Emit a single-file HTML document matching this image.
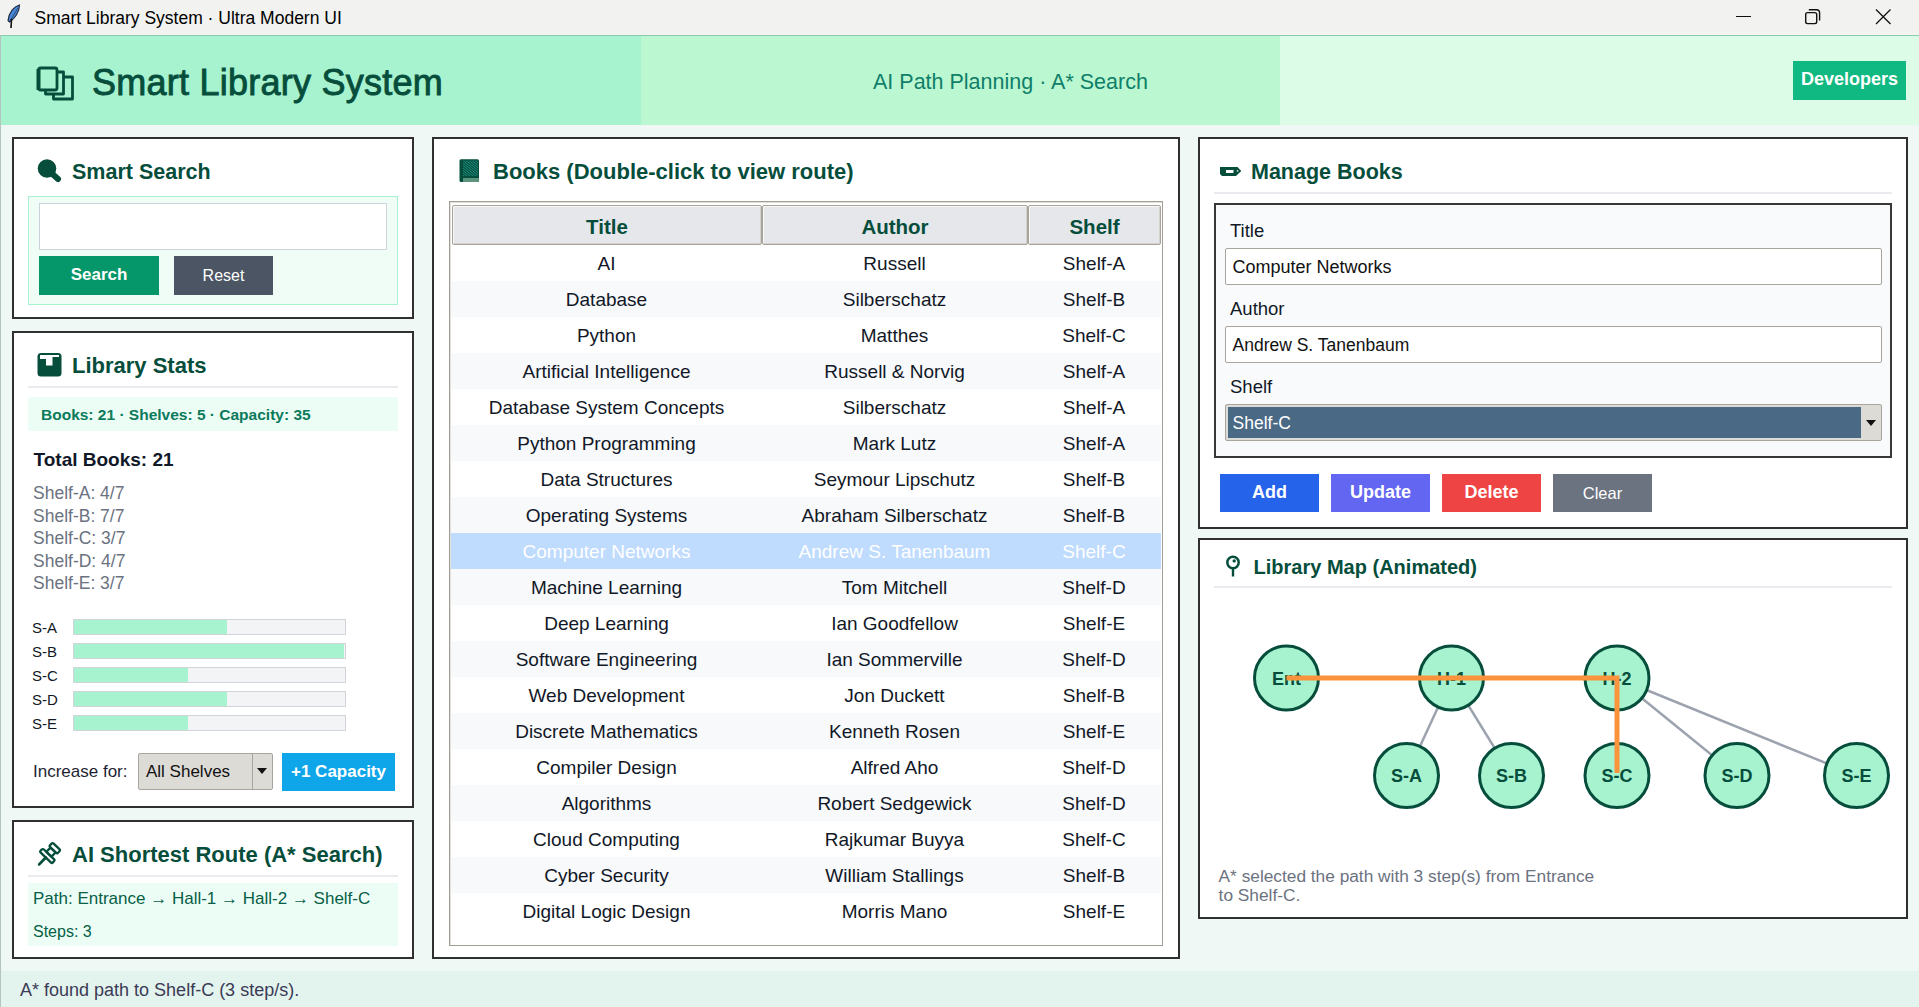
<!DOCTYPE html>
<html><head><meta charset="utf-8"><title>Smart Library System</title>
<style>
html,body{margin:0;padding:0;width:1919px;height:1007px;overflow:hidden;background:#eef8f4}
body{position:relative;font-family:"Liberation Sans",sans-serif}
body>div{position:absolute}
.t{white-space:nowrap}
svg{overflow:visible}
</style></head><body>
<div style="left:0px;top:0px;width:1919px;height:35px;background:#f2f2f0"></div>
<div style="left:0px;top:34px;width:1919px;height:1px;background:#f7f4f2"></div>
<svg style="position:absolute;left:0;top:0" width="30" height="34" viewBox="0 0 30 34"><path d="M19.5 5 C14 6.5 9 12 8 20.5 L9.5 22 C15 18.5 19.5 12 19.5 5 Z" fill="#4a86d8" stroke="#1c2a3a" stroke-width="1.1"/><path d="M18 8 L10.5 20" stroke="#2a4a7a" stroke-width="1"/><path d="M11.5 19 L11 28" stroke="#111" stroke-width="1.6"/></svg>
<div class="t" style="left:34.5px;top:7.44px;font-size:17.5px;line-height:23px;font-weight:normal;color:#000;">Smart Library System · Ultra Modern UI</div>
<div style="left:1736px;top:16px;width:15px;height:1px;background:#111"></div>
<svg style="position:absolute;left:1800px;top:4px" width="26" height="26" viewBox="0 0 26 26"><rect x="5.7" y="8.6" width="11" height="11" rx="1.8" fill="none" stroke="#111" stroke-width="1.4"/><path d="M8.8 5.7 H16.5 Q19.6 5.7 19.6 8.8 V16.5" fill="none" stroke="#111" stroke-width="1.4"/></svg>
<svg style="position:absolute;left:1869px;top:3px" width="28" height="28" viewBox="0 0 28 28"><path d="M7 6.5 L21.5 21 M21.5 6.5 L7 21" stroke="#111" stroke-width="1.3"/></svg>
<div style="left:0px;top:35px;width:1919px;height:1px;background:#86cbae"></div>
<div style="left:0px;top:36px;width:641px;height:89px;background:#a7f3d0"></div>
<div style="left:641px;top:36px;width:639px;height:89px;background:#bbf7d0"></div>
<div style="left:1280px;top:36px;width:639px;height:89px;background:#dcfce7"></div>
<svg style="position:absolute;left:36px;top:65px" width="40" height="37" viewBox="0 0 40 37"><g fill="none" stroke="#064e3b" stroke-width="2.8" stroke-linejoin="round"><rect x="2.5" y="3" width="18.5" height="22" rx="2"/><path d="M21 7 H27.5 V29 H9.5 V25"/><path d="M27.5 12 H36.5 V34 H17.5 V29"/></g><path d="M2.5 4 V25" stroke="#064e3b" stroke-width="4"/></svg>
<div class="t" style="left:92px;top:59.03px;font-size:36px;line-height:47px;font-weight:normal;color:#064e3b;letter-spacing:0.25px;-webkit-text-stroke:0.9px #064e3b">Smart Library System</div>
<div class="t" style="left:873px;top:67.55px;font-size:21.5px;line-height:28px;font-weight:normal;color:#0f7f6a;">AI Path Planning · A* Search</div>
<div style="left:1793px;top:61px;width:113px;height:39px;background:#10b981"></div>
<div class="t" style="left:1549.5px;width:600px;text-align:center;top:68.26px;font-size:18px;line-height:23px;font-weight:bold;color:#fff;">Developers</div>
<div style="left:0px;top:125px;width:1919px;height:846px;background:#f0f8f5"></div>
<div style="left:0px;top:971px;width:1919px;height:36px;background:#e3f3ee"></div>
<div class="t" style="left:20px;top:978.66px;font-size:18px;line-height:23px;font-weight:normal;color:#3b3b55;">A* found path to Shelf-C (3 step/s).</div>
<div style="left:12px;top:137px;width:402px;height:182px;background:#fff;border:2px solid #303030;box-sizing:border-box"></div>
<svg style="position:absolute;left:36px;top:158px" width="28" height="26" viewBox="0 0 28 26"><circle cx="11" cy="10.5" r="9.3" fill="#064e3b"/><path d="M17 16.5 L22 21" stroke="#064e3b" stroke-width="6" stroke-linecap="round"/></svg>
<div class="t" style="left:72px;top:157.95px;font-size:21.5px;line-height:28px;font-weight:bold;color:#064e3b;">Smart Search</div>
<div style="left:28px;top:196px;width:370px;height:109px;background:#f0fdf7;border:1px solid #a7f3d0;box-sizing:border-box"></div>
<div style="left:39px;top:203px;width:348px;height:47px;background:#fff;border:1px solid #cfd2dc;box-sizing:border-box"></div>
<div style="left:39px;top:256px;width:120px;height:38.5px;background:#059669"></div>
<div class="t" style="left:-201px;width:600px;text-align:center;top:264.11px;font-size:17px;line-height:22px;font-weight:bold;color:#fff;">Search</div>
<div style="left:174px;top:256px;width:99px;height:38.5px;background:#4b5563"></div>
<div class="t" style="left:-76.5px;width:600px;text-align:center;top:264.96px;font-size:16px;line-height:21px;font-weight:normal;color:#fff;">Reset</div>
<div style="left:12px;top:331px;width:402px;height:477px;background:#fff;border:2px solid #303030;box-sizing:border-box"></div>
<svg style="position:absolute;left:35px;top:352px" width="28" height="26" viewBox="0 0 28 26"><rect x="2.5" y="1" width="24" height="23.5" rx="3.5" fill="#064e3b"/><path d="M5 3 H24 V5 H17.5 V13.5 H11 V7 H5 Z" fill="#fff"/></svg>
<div class="t" style="left:72px;top:351.18px;font-size:22px;line-height:29px;font-weight:bold;color:#064e3b;">Library Stats</div>
<div style="left:28px;top:386px;width:370px;height:2px;background:#eaebee"></div>
<div style="left:28px;top:397px;width:370px;height:34px;background:#ecfdf5"></div>
<div class="t" style="left:41px;top:405.03px;font-size:15.5px;line-height:20px;font-weight:bold;color:#0b7a5c;">Books: 21 · Shelves: 5 · Capacity: 35</div>
<div class="t" style="left:33.5px;top:446.72px;font-size:19px;line-height:25px;font-weight:bold;color:#111827;">Total Books: 21</div>
<div class="t" style="left:33px;top:482.44px;font-size:17.5px;line-height:23px;font-weight:normal;color:#6b7280;">Shelf-A: 4/7</div>
<div class="t" style="left:33px;top:505.44px;font-size:17.5px;line-height:23px;font-weight:normal;color:#6b7280;">Shelf-B: 7/7</div>
<div class="t" style="left:33px;top:527.44px;font-size:17.5px;line-height:23px;font-weight:normal;color:#6b7280;">Shelf-C: 3/7</div>
<div class="t" style="left:33px;top:550.44px;font-size:17.5px;line-height:23px;font-weight:normal;color:#6b7280;">Shelf-D: 4/7</div>
<div class="t" style="left:33px;top:572.44px;font-size:17.5px;line-height:23px;font-weight:normal;color:#6b7280;">Shelf-E: 3/7</div>
<div class="t" style="left:32px;top:618.40px;font-size:15px;line-height:20px;font-weight:normal;color:#111827;">S-A</div>
<div style="left:73px;top:619px;width:273px;height:16px;background:#f3f4f6;border:1px solid #d1d5db;box-sizing:border-box"></div>
<div style="left:74px;top:620px;width:153px;height:14px;background:#a7f3d0"></div>
<div class="t" style="left:32px;top:642.40px;font-size:15px;line-height:20px;font-weight:normal;color:#111827;">S-B</div>
<div style="left:73px;top:643px;width:273px;height:16px;background:#f3f4f6;border:1px solid #d1d5db;box-sizing:border-box"></div>
<div style="left:74px;top:644px;width:270px;height:14px;background:#a7f3d0"></div>
<div class="t" style="left:32px;top:666.40px;font-size:15px;line-height:20px;font-weight:normal;color:#111827;">S-C</div>
<div style="left:73px;top:667px;width:273px;height:16px;background:#f3f4f6;border:1px solid #d1d5db;box-sizing:border-box"></div>
<div style="left:74px;top:668px;width:114px;height:14px;background:#a7f3d0"></div>
<div class="t" style="left:32px;top:690.40px;font-size:15px;line-height:20px;font-weight:normal;color:#111827;">S-D</div>
<div style="left:73px;top:691px;width:273px;height:16px;background:#f3f4f6;border:1px solid #d1d5db;box-sizing:border-box"></div>
<div style="left:74px;top:692px;width:153px;height:14px;background:#a7f3d0"></div>
<div class="t" style="left:32px;top:714.40px;font-size:15px;line-height:20px;font-weight:normal;color:#111827;">S-E</div>
<div style="left:73px;top:715px;width:273px;height:16px;background:#f3f4f6;border:1px solid #d1d5db;box-sizing:border-box"></div>
<div style="left:74px;top:716px;width:114px;height:14px;background:#a7f3d0"></div>
<div class="t" style="left:33px;top:761.11px;font-size:17px;line-height:22px;font-weight:normal;color:#1f1f33;">Increase for:</div>
<div style="left:138px;top:753px;width:135px;height:37px;background:#dddbd6;border:1px solid #a9a59e;border-radius:2px;box-sizing:border-box"></div>
<div style="left:252px;top:754px;width:1px;height:35px;background:#a9a59e"></div>
<svg style="position:absolute;left:255px;top:766px" width="14" height="10" viewBox="0 0 14 10"><path d="M2 2 H12 L7 8 Z" fill="#111"/></svg>
<div class="t" style="left:146px;top:761.11px;font-size:17px;line-height:22px;font-weight:normal;color:#111;">All Shelves</div>
<div style="left:282px;top:753px;width:113px;height:38px;background:#0ea5e9"></div>
<div class="t" style="left:38.5px;width:600px;text-align:center;top:761.11px;font-size:17px;line-height:22px;font-weight:bold;color:#fff;">+1 Capacity</div>
<div style="left:12px;top:820px;width:402px;height:139px;background:#fff;border:2px solid #303030;box-sizing:border-box"></div>
<svg style="position:absolute;left:30px;top:835px" width="40" height="40" viewBox="0 0 40 40"><g transform="translate(19.6,18.6) rotate(44)" fill="none" stroke="#064e3b" stroke-width="2.3" stroke-linejoin="round"><rect x="-5.5" y="-10" width="11" height="5" rx="1.5"/><rect x="-3.5" y="-5" width="7" height="6"/><rect x="-8.5" y="1" width="17" height="4.5" rx="1.5"/><path d="M0 5.5 V15" stroke-width="2.8" stroke-linecap="round"/></g></svg>
<div class="t" style="left:72px;top:839.88px;font-size:22px;line-height:29px;font-weight:bold;color:#064e3b;">AI Shortest Route (A* Search)</div>
<div style="left:28px;top:875px;width:370px;height:2px;background:#eaebee"></div>
<div style="left:28px;top:883px;width:370px;height:63px;background:#ecfdf5"></div>
<div class="t" style="left:33px;top:888.31px;font-size:17px;line-height:22px;font-weight:normal;color:#065f46;">Path: Entrance → Hall-1 → Hall-2 → Shelf-C</div>
<div class="t" style="left:33px;top:920.56px;font-size:16px;line-height:21px;font-weight:normal;color:#065f46;">Steps: 3</div>
<div style="left:432px;top:137px;width:748px;height:822px;background:#fff;border:2px solid #303030;box-sizing:border-box"></div>
<svg style="position:absolute;left:458px;top:158px" width="24" height="26" viewBox="0 0 24 26"><defs><clipPath id="bk"><rect x="5" y="2.5" width="15" height="17"/></clipPath></defs><rect x="1.5" y="1.3" width="19.5" height="22.7" rx="1.5" fill="#064e3b"/><g clip-path="url(#bk)"><path d="M-22 0 L0 18" stroke="#1f8f86" stroke-width="1"/><path d="M-19 0 L3 18" stroke="#1f8f86" stroke-width="1"/><path d="M-16 0 L6 18" stroke="#1f8f86" stroke-width="1"/><path d="M-13 0 L9 18" stroke="#1f8f86" stroke-width="1"/><path d="M-10 0 L12 18" stroke="#1f8f86" stroke-width="1"/><path d="M-7 0 L15 18" stroke="#1f8f86" stroke-width="1"/><path d="M-4 0 L18 18" stroke="#1f8f86" stroke-width="1"/><path d="M-1 0 L21 18" stroke="#1f8f86" stroke-width="1"/><path d="M2 0 L24 18" stroke="#1f8f86" stroke-width="1"/><path d="M5 0 L27 18" stroke="#1f8f86" stroke-width="1"/><path d="M8 0 L30 18" stroke="#1f8f86" stroke-width="1"/><path d="M11 0 L33 18" stroke="#1f8f86" stroke-width="1"/><path d="M14 0 L36 18" stroke="#1f8f86" stroke-width="1"/><path d="M17 0 L39 18" stroke="#1f8f86" stroke-width="1"/></g><rect x="5" y="20" width="16" height="4" fill="#5d9480"/></svg>
<div class="t" style="left:493px;top:156.88px;font-size:22px;line-height:29px;font-weight:bold;color:#064e3b;">Books (Double-click to view route)</div>
<div style="left:449px;top:201px;width:714px;height:745px;background:#fff;border:1px solid #a29e96;box-shadow:inset 1px 1px 0 #e2e0db;box-sizing:border-box"></div>
<div style="left:452px;top:205px;width:310px;height:40px;background:#e5e7eb;border:1px solid #a8a49c;border-radius:2px;box-shadow:inset 1px 1px 0 #f8f8f6, inset -1px -1px 0 #d4d2cc;box-sizing:border-box"></div>
<div class="t" style="left:307.0px;width:600px;text-align:center;top:212.60px;font-size:20.5px;line-height:27px;font-weight:bold;color:#064e3b;">Title</div>
<div style="left:762px;top:205px;width:266px;height:40px;background:#e5e7eb;border:1px solid #a8a49c;border-radius:2px;box-shadow:inset 1px 1px 0 #f8f8f6, inset -1px -1px 0 #d4d2cc;box-sizing:border-box"></div>
<div class="t" style="left:595.0px;width:600px;text-align:center;top:212.60px;font-size:20.5px;line-height:27px;font-weight:bold;color:#064e3b;">Author</div>
<div style="left:1028px;top:205px;width:133px;height:40px;background:#e5e7eb;border:1px solid #a8a49c;border-radius:2px;box-shadow:inset 1px 1px 0 #f8f8f6, inset -1px -1px 0 #d4d2cc;box-sizing:border-box"></div>
<div class="t" style="left:794.5px;width:600px;text-align:center;top:212.60px;font-size:20.5px;line-height:27px;font-weight:bold;color:#064e3b;">Shelf</div>
<div class="t" style="left:306.5px;width:600px;text-align:center;top:251.12px;font-size:19px;line-height:25px;font-weight:normal;color:#111827;">AI</div>
<div class="t" style="left:594.5px;width:600px;text-align:center;top:251.12px;font-size:19px;line-height:25px;font-weight:normal;color:#111827;">Russell</div>
<div class="t" style="left:794px;width:600px;text-align:center;top:251.12px;font-size:19px;line-height:25px;font-weight:normal;color:#111827;">Shelf-A</div>
<div style="left:451px;top:281px;width:710px;height:36px;background:#f8f9fb"></div>
<div class="t" style="left:306.5px;width:600px;text-align:center;top:287.12px;font-size:19px;line-height:25px;font-weight:normal;color:#111827;">Database</div>
<div class="t" style="left:594.5px;width:600px;text-align:center;top:287.12px;font-size:19px;line-height:25px;font-weight:normal;color:#111827;">Silberschatz</div>
<div class="t" style="left:794px;width:600px;text-align:center;top:287.12px;font-size:19px;line-height:25px;font-weight:normal;color:#111827;">Shelf-B</div>
<div class="t" style="left:306.5px;width:600px;text-align:center;top:323.12px;font-size:19px;line-height:25px;font-weight:normal;color:#111827;">Python</div>
<div class="t" style="left:594.5px;width:600px;text-align:center;top:323.12px;font-size:19px;line-height:25px;font-weight:normal;color:#111827;">Matthes</div>
<div class="t" style="left:794px;width:600px;text-align:center;top:323.12px;font-size:19px;line-height:25px;font-weight:normal;color:#111827;">Shelf-C</div>
<div style="left:451px;top:353px;width:710px;height:36px;background:#f8f9fb"></div>
<div class="t" style="left:306.5px;width:600px;text-align:center;top:359.12px;font-size:19px;line-height:25px;font-weight:normal;color:#111827;">Artificial Intelligence</div>
<div class="t" style="left:594.5px;width:600px;text-align:center;top:359.12px;font-size:19px;line-height:25px;font-weight:normal;color:#111827;">Russell &amp; Norvig</div>
<div class="t" style="left:794px;width:600px;text-align:center;top:359.12px;font-size:19px;line-height:25px;font-weight:normal;color:#111827;">Shelf-A</div>
<div class="t" style="left:306.5px;width:600px;text-align:center;top:395.12px;font-size:19px;line-height:25px;font-weight:normal;color:#111827;">Database System Concepts</div>
<div class="t" style="left:594.5px;width:600px;text-align:center;top:395.12px;font-size:19px;line-height:25px;font-weight:normal;color:#111827;">Silberschatz</div>
<div class="t" style="left:794px;width:600px;text-align:center;top:395.12px;font-size:19px;line-height:25px;font-weight:normal;color:#111827;">Shelf-A</div>
<div style="left:451px;top:425px;width:710px;height:36px;background:#f8f9fb"></div>
<div class="t" style="left:306.5px;width:600px;text-align:center;top:431.12px;font-size:19px;line-height:25px;font-weight:normal;color:#111827;">Python Programming</div>
<div class="t" style="left:594.5px;width:600px;text-align:center;top:431.12px;font-size:19px;line-height:25px;font-weight:normal;color:#111827;">Mark Lutz</div>
<div class="t" style="left:794px;width:600px;text-align:center;top:431.12px;font-size:19px;line-height:25px;font-weight:normal;color:#111827;">Shelf-A</div>
<div class="t" style="left:306.5px;width:600px;text-align:center;top:467.12px;font-size:19px;line-height:25px;font-weight:normal;color:#111827;">Data Structures</div>
<div class="t" style="left:594.5px;width:600px;text-align:center;top:467.12px;font-size:19px;line-height:25px;font-weight:normal;color:#111827;">Seymour Lipschutz</div>
<div class="t" style="left:794px;width:600px;text-align:center;top:467.12px;font-size:19px;line-height:25px;font-weight:normal;color:#111827;">Shelf-B</div>
<div style="left:451px;top:497px;width:710px;height:36px;background:#f8f9fb"></div>
<div class="t" style="left:306.5px;width:600px;text-align:center;top:503.12px;font-size:19px;line-height:25px;font-weight:normal;color:#111827;">Operating Systems</div>
<div class="t" style="left:594.5px;width:600px;text-align:center;top:503.12px;font-size:19px;line-height:25px;font-weight:normal;color:#111827;">Abraham Silberschatz</div>
<div class="t" style="left:794px;width:600px;text-align:center;top:503.12px;font-size:19px;line-height:25px;font-weight:normal;color:#111827;">Shelf-B</div>
<div style="left:451px;top:533px;width:710px;height:36px;background:#bfdbfe"></div>
<div class="t" style="left:306.5px;width:600px;text-align:center;top:539.12px;font-size:19px;line-height:25px;font-weight:normal;color:#fff;">Computer Networks</div>
<div class="t" style="left:594.5px;width:600px;text-align:center;top:539.12px;font-size:19px;line-height:25px;font-weight:normal;color:#fff;">Andrew S. Tanenbaum</div>
<div class="t" style="left:794px;width:600px;text-align:center;top:539.12px;font-size:19px;line-height:25px;font-weight:normal;color:#fff;">Shelf-C</div>
<div style="left:451px;top:569px;width:710px;height:36px;background:#f8f9fb"></div>
<div class="t" style="left:306.5px;width:600px;text-align:center;top:575.12px;font-size:19px;line-height:25px;font-weight:normal;color:#111827;">Machine Learning</div>
<div class="t" style="left:594.5px;width:600px;text-align:center;top:575.12px;font-size:19px;line-height:25px;font-weight:normal;color:#111827;">Tom Mitchell</div>
<div class="t" style="left:794px;width:600px;text-align:center;top:575.12px;font-size:19px;line-height:25px;font-weight:normal;color:#111827;">Shelf-D</div>
<div class="t" style="left:306.5px;width:600px;text-align:center;top:611.12px;font-size:19px;line-height:25px;font-weight:normal;color:#111827;">Deep Learning</div>
<div class="t" style="left:594.5px;width:600px;text-align:center;top:611.12px;font-size:19px;line-height:25px;font-weight:normal;color:#111827;">Ian Goodfellow</div>
<div class="t" style="left:794px;width:600px;text-align:center;top:611.12px;font-size:19px;line-height:25px;font-weight:normal;color:#111827;">Shelf-E</div>
<div style="left:451px;top:641px;width:710px;height:36px;background:#f8f9fb"></div>
<div class="t" style="left:306.5px;width:600px;text-align:center;top:647.12px;font-size:19px;line-height:25px;font-weight:normal;color:#111827;">Software Engineering</div>
<div class="t" style="left:594.5px;width:600px;text-align:center;top:647.12px;font-size:19px;line-height:25px;font-weight:normal;color:#111827;">Ian Sommerville</div>
<div class="t" style="left:794px;width:600px;text-align:center;top:647.12px;font-size:19px;line-height:25px;font-weight:normal;color:#111827;">Shelf-D</div>
<div class="t" style="left:306.5px;width:600px;text-align:center;top:683.12px;font-size:19px;line-height:25px;font-weight:normal;color:#111827;">Web Development</div>
<div class="t" style="left:594.5px;width:600px;text-align:center;top:683.12px;font-size:19px;line-height:25px;font-weight:normal;color:#111827;">Jon Duckett</div>
<div class="t" style="left:794px;width:600px;text-align:center;top:683.12px;font-size:19px;line-height:25px;font-weight:normal;color:#111827;">Shelf-B</div>
<div style="left:451px;top:713px;width:710px;height:36px;background:#f8f9fb"></div>
<div class="t" style="left:306.5px;width:600px;text-align:center;top:719.12px;font-size:19px;line-height:25px;font-weight:normal;color:#111827;">Discrete Mathematics</div>
<div class="t" style="left:594.5px;width:600px;text-align:center;top:719.12px;font-size:19px;line-height:25px;font-weight:normal;color:#111827;">Kenneth Rosen</div>
<div class="t" style="left:794px;width:600px;text-align:center;top:719.12px;font-size:19px;line-height:25px;font-weight:normal;color:#111827;">Shelf-E</div>
<div class="t" style="left:306.5px;width:600px;text-align:center;top:755.12px;font-size:19px;line-height:25px;font-weight:normal;color:#111827;">Compiler Design</div>
<div class="t" style="left:594.5px;width:600px;text-align:center;top:755.12px;font-size:19px;line-height:25px;font-weight:normal;color:#111827;">Alfred Aho</div>
<div class="t" style="left:794px;width:600px;text-align:center;top:755.12px;font-size:19px;line-height:25px;font-weight:normal;color:#111827;">Shelf-D</div>
<div style="left:451px;top:785px;width:710px;height:36px;background:#f8f9fb"></div>
<div class="t" style="left:306.5px;width:600px;text-align:center;top:791.12px;font-size:19px;line-height:25px;font-weight:normal;color:#111827;">Algorithms</div>
<div class="t" style="left:594.5px;width:600px;text-align:center;top:791.12px;font-size:19px;line-height:25px;font-weight:normal;color:#111827;">Robert Sedgewick</div>
<div class="t" style="left:794px;width:600px;text-align:center;top:791.12px;font-size:19px;line-height:25px;font-weight:normal;color:#111827;">Shelf-D</div>
<div class="t" style="left:306.5px;width:600px;text-align:center;top:827.12px;font-size:19px;line-height:25px;font-weight:normal;color:#111827;">Cloud Computing</div>
<div class="t" style="left:594.5px;width:600px;text-align:center;top:827.12px;font-size:19px;line-height:25px;font-weight:normal;color:#111827;">Rajkumar Buyya</div>
<div class="t" style="left:794px;width:600px;text-align:center;top:827.12px;font-size:19px;line-height:25px;font-weight:normal;color:#111827;">Shelf-C</div>
<div style="left:451px;top:857px;width:710px;height:36px;background:#f8f9fb"></div>
<div class="t" style="left:306.5px;width:600px;text-align:center;top:863.12px;font-size:19px;line-height:25px;font-weight:normal;color:#111827;">Cyber Security</div>
<div class="t" style="left:594.5px;width:600px;text-align:center;top:863.12px;font-size:19px;line-height:25px;font-weight:normal;color:#111827;">William Stallings</div>
<div class="t" style="left:794px;width:600px;text-align:center;top:863.12px;font-size:19px;line-height:25px;font-weight:normal;color:#111827;">Shelf-B</div>
<div class="t" style="left:306.5px;width:600px;text-align:center;top:899.12px;font-size:19px;line-height:25px;font-weight:normal;color:#111827;">Digital Logic Design</div>
<div class="t" style="left:594.5px;width:600px;text-align:center;top:899.12px;font-size:19px;line-height:25px;font-weight:normal;color:#111827;">Morris Mano</div>
<div class="t" style="left:794px;width:600px;text-align:center;top:899.12px;font-size:19px;line-height:25px;font-weight:normal;color:#111827;">Shelf-E</div>
<div style="left:1198px;top:137px;width:710px;height:392px;background:#fff;border:2px solid #303030;box-sizing:border-box"></div>
<svg style="position:absolute;left:1218px;top:163px" width="26" height="18" viewBox="0 0 26 18"><path d="M2 4 H19.5 L23.3 8 L18 13 H4 L2 11 Z" fill="#064e3b"/><rect x="8" y="7" width="7.5" height="3" fill="#fff"/><circle cx="19.6" cy="7.8" r="0.9" fill="#cfe3dc"/></svg>
<div class="t" style="left:1251px;top:157.95px;font-size:21.5px;line-height:28px;font-weight:bold;color:#064e3b;">Manage Books</div>
<div style="left:1214px;top:192px;width:678px;height:2px;background:#eaebee"></div>
<div style="left:1214px;top:203px;width:678px;height:255px;background:#f8fafc;border:2px solid #383838;box-sizing:border-box"></div>
<div class="t" style="left:1230px;top:219.09px;font-size:18.5px;line-height:24px;font-weight:normal;color:#111827;">Title</div>
<div style="left:1225px;top:248px;width:657px;height:37px;background:#fff;border:1px solid #a9a59e;border-radius:2px;box-sizing:border-box"></div>
<div class="t" style="left:1232.5px;top:255.86px;font-size:18px;line-height:23px;font-weight:normal;color:#111;">Computer Networks</div>
<div class="t" style="left:1230px;top:297.39px;font-size:18.5px;line-height:24px;font-weight:normal;color:#111827;">Author</div>
<div style="left:1225px;top:326px;width:657px;height:37px;background:#fff;border:1px solid #a9a59e;border-radius:2px;box-sizing:border-box"></div>
<div class="t" style="left:1232.5px;top:334.44px;font-size:17.5px;line-height:23px;font-weight:normal;color:#111;">Andrew S. Tanenbaum</div>
<div class="t" style="left:1230px;top:375.29px;font-size:18.5px;line-height:24px;font-weight:normal;color:#111827;">Shelf</div>
<div style="left:1225px;top:404px;width:657px;height:37px;background:#dddbd6;border:1px solid #a9a59e;border-radius:2px;box-sizing:border-box"></div>
<div style="left:1228px;top:407px;width:633px;height:31px;background:#4a6984"></div>
<svg style="position:absolute;left:1864px;top:418px" width="14" height="10" viewBox="0 0 14 10"><path d="M2 2 H12 L7 8 Z" fill="#111"/></svg>
<div class="t" style="left:1232.5px;top:412.24px;font-size:17.5px;line-height:23px;font-weight:normal;color:#fff;">Shelf-C</div>
<div style="left:1220px;top:474px;width:99px;height:38px;background:#2563eb"></div>
<div class="t" style="left:969.5px;width:600px;text-align:center;top:481.26px;font-size:18px;line-height:23px;font-weight:bold;color:#fff;">Add</div>
<div style="left:1331px;top:474px;width:99px;height:38px;background:#6366f1"></div>
<div class="t" style="left:1080.5px;width:600px;text-align:center;top:481.26px;font-size:18px;line-height:23px;font-weight:bold;color:#fff;">Update</div>
<div style="left:1442px;top:474px;width:99px;height:38px;background:#ef4444"></div>
<div class="t" style="left:1191.5px;width:600px;text-align:center;top:481.26px;font-size:18px;line-height:23px;font-weight:bold;color:#fff;">Delete</div>
<div style="left:1553px;top:474px;width:99px;height:38px;background:#6b7280"></div>
<div class="t" style="left:1302.5px;width:600px;text-align:center;top:482.78px;font-size:16.5px;line-height:21px;font-weight:normal;color:#fff;">Clear</div>
<div style="left:1198px;top:538px;width:710px;height:381px;background:#fff;border:2px solid #303030;box-sizing:border-box"></div>
<svg style="position:absolute;left:1222px;top:554px" width="22" height="26" viewBox="0 0 22 26"><circle cx="11" cy="8.5" r="5.7" fill="none" stroke="#064e3b" stroke-width="2.5"/><circle cx="12.2" cy="6.9" r="1.7" fill="#064e3b"/><path d="M11 14 V22.5" stroke="#064e3b" stroke-width="2.4"/></svg>
<div class="t" style="left:1253.6px;top:553.77px;font-size:20px;line-height:26px;font-weight:bold;color:#064e3b;">Library Map (Animated)</div>
<div style="left:1214px;top:586px;width:678px;height:2px;background:#eaebee"></div>
<svg style="position:absolute;left:0;top:0" width="1919" height="1007"><line x1="1286.5" y1="678" x2="1451.5" y2="678" stroke="#9ca3af" stroke-width="2.5"/><line x1="1451.5" y1="678" x2="1617" y2="678" stroke="#9ca3af" stroke-width="2.5"/><line x1="1451.5" y1="678" x2="1406.5" y2="775.5" stroke="#9ca3af" stroke-width="2.5"/><line x1="1451.5" y1="678" x2="1511.5" y2="775.5" stroke="#9ca3af" stroke-width="2.5"/><line x1="1617" y1="678" x2="1617" y2="775.5" stroke="#9ca3af" stroke-width="2.5"/><line x1="1617" y1="678" x2="1737" y2="775.5" stroke="#9ca3af" stroke-width="2.5"/><line x1="1617" y1="678" x2="1856.5" y2="775.5" stroke="#9ca3af" stroke-width="2.5"/><circle cx="1286.5" cy="678" r="32" fill="#a7f3d0" stroke="#064e3b" stroke-width="3"/><circle cx="1451.5" cy="678" r="32" fill="#a7f3d0" stroke="#064e3b" stroke-width="3"/><circle cx="1617" cy="678" r="32" fill="#a7f3d0" stroke="#064e3b" stroke-width="3"/><circle cx="1406.5" cy="775.5" r="32" fill="#a7f3d0" stroke="#064e3b" stroke-width="3"/><circle cx="1511.5" cy="775.5" r="32" fill="#a7f3d0" stroke="#064e3b" stroke-width="3"/><circle cx="1617" cy="775.5" r="32" fill="#a7f3d0" stroke="#064e3b" stroke-width="3"/><circle cx="1737" cy="775.5" r="32" fill="#a7f3d0" stroke="#064e3b" stroke-width="3"/><circle cx="1856.5" cy="775.5" r="32" fill="#a7f3d0" stroke="#064e3b" stroke-width="3"/><text x="1286.5" y="684.5" text-anchor="middle" font-family="Liberation Sans" font-weight="bold" font-size="18" fill="#064e3b">Ent</text><text x="1451.5" y="684.5" text-anchor="middle" font-family="Liberation Sans" font-weight="bold" font-size="18" fill="#064e3b">H-1</text><text x="1617" y="684.5" text-anchor="middle" font-family="Liberation Sans" font-weight="bold" font-size="18" fill="#064e3b">H-2</text><text x="1406.5" y="782.0" text-anchor="middle" font-family="Liberation Sans" font-weight="bold" font-size="18" fill="#064e3b">S-A</text><text x="1511.5" y="782.0" text-anchor="middle" font-family="Liberation Sans" font-weight="bold" font-size="18" fill="#064e3b">S-B</text><text x="1617" y="782.0" text-anchor="middle" font-family="Liberation Sans" font-weight="bold" font-size="18" fill="#064e3b">S-C</text><text x="1737" y="782.0" text-anchor="middle" font-family="Liberation Sans" font-weight="bold" font-size="18" fill="#064e3b">S-D</text><text x="1856.5" y="782.0" text-anchor="middle" font-family="Liberation Sans" font-weight="bold" font-size="18" fill="#064e3b">S-E</text><path d="M1286.5 678 H1617 V773" fill="none" stroke="#fb923c" stroke-width="5"/></svg>
<div class="t" style="left:1218.6px;top:864.61px;font-size:17.3px;line-height:22px;font-weight:normal;color:#6b7280;">A* selected the path with 3 step(s) from Entrance</div>
<div class="t" style="left:1218.6px;top:883.71px;font-size:17.3px;line-height:22px;font-weight:normal;color:#6b7280;">to Shelf-C.</div>
<div style="left:0px;top:35px;width:1px;height:972px;background:#b4c4be"></div>
</body></html>
